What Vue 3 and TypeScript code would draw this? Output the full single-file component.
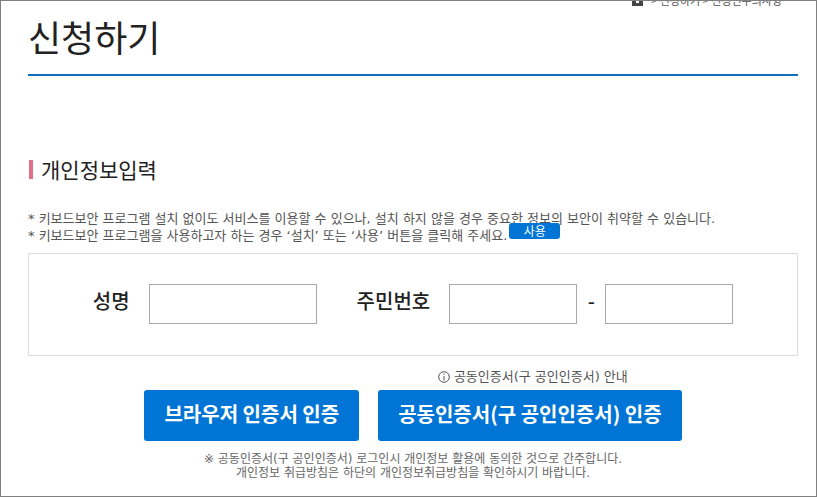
<script setup lang="ts">
import { ref } from 'vue'

const name = ref('')
const idFront = ref('')
const idBack = ref('')
</script>

<template>
  <div class="page">
    <nav class="crumbs" aria-label="현재 위치">
      <a class="home" href="#" aria-label="홈">
        <svg width="11" height="12" viewBox="0 0 11 12">
          <path d="M5.500 0 0 5v7h11V5z" fill="#444" />
          <path d="M4 6h3v3H4z" fill="#fff" />
        </svg>
      </a>
      <span>&gt; 신청하기 &gt; 신청인주의사항</span>
    </nav>

    <h1>신청하기</h1>

    <main>
      <h2>개인정보입력</h2>

      <div class="notes">
        <p>* 키보드보안 프로그램 설치 없이도 서비스를 이용할 수 있으나, 설치 하지 않을 경우 중요한 정보의 보안이 취약할 수 있습니다.</p>
        <p class="with-button">
          <span>* 키보드보안 프로그램을 사용하고자 하는 경우 ‘설치’ 또는 ‘사용’ 버튼을 클릭해 주세요.</span>
          <button type="button" class="use">사용</button>
        </p>
      </div>

      <form @submit.prevent>
        <div class="fields">
          <div class="field">
            <label for="name">성명</label>
            <input id="name" v-model="name" class="wide" type="text" />
          </div>
          <div class="field">
            <label for="id-front">주민번호</label>
            <div class="pair">
              <input id="id-front" v-model="idFront" type="text" maxlength="6" />
              <span class="dash">-</span>
              <input v-model="idBack" type="password" maxlength="7" aria-label="주민번호 뒷자리" />
            </div>
          </div>
        </div>

        <div class="actions">
          <button type="submit" class="primary">브라우저 인증서 인증</button>
          <div class="joint">
            <a href="#" class="guide">
              <svg width="12" height="12" viewBox="0 0 12 12" aria-hidden="true">
                <circle cx="6" cy="6" r="5.3" fill="none" stroke="#555" />
                <path d="M5.500 2.500h1v1.200h-1zM5.500 5h1v4.500h-1z" fill="#555" />
              </svg>
              <span>공동인증서(구 공인인증서) 안내</span>
            </a>
            <button type="submit" class="primary">공동인증서(구 공인인증서) 인증</button>
          </div>
        </div>
      </form>

      <p class="agreement">
        ※ 공동인증서(구 공인인증서) 로그인시 개인정보 활용에 동의한 것으로 간주합니다.<br />
        개인정보 취급방침은 하단의 개인정보취급방침을 확인하시기 바랍니다.
      </p>
    </main>
  </div>
</template>

<style>
body {
  background: #fff;
}
</style>

<style scoped>
.page {
  box-sizing: border-box;
  min-height: 100vh;
  padding: 0 18px 16px 27px;
  border: 1px solid #808080;
  color: #222;
  font-family: 'Noto Sans CJK KR', sans-serif;
}

h1,
h2,
p {
  margin: 0;
}

.crumbs {
  display: flex;
  justify-content: flex-end;
  align-items: flex-end;
  gap: 8px;
  height: 5px;
  padding-right: 16px;
  overflow: hidden;
  color: #555;
  font-size: 11px;
  line-height: 12px;
}

.home {
  display: flex;
}

h1 {
  padding: 2px 0 10px;
  border-bottom: 2px solid #0e6fbe;
  font-size: 36px;
  font-weight: 400;
  line-height: 56px;
}

h2 {
  display: flex;
  align-items: center;
  gap: 8px;
  margin-top: 79px;
  padding-left: 1px;
  font-size: 21px;
  font-weight: 400;
  line-height: 28px;
}

h2::before {
  content: '';
  width: 4px;
  height: 19px;
  background: #e07088;
}

.notes {
  margin-top: 27px;
  color: #555;
  font-family: 'DejaVu Sans', 'Noto Sans CJK KR', sans-serif;
  font-size: 13px;
  line-height: 17px;
}

.with-button {
  display: flex;
  align-items: flex-start;
  gap: 2px;
  height: 17px;
}

.use {
  width: 51px;
  height: 16px;
  margin-top: -4px;
  padding: 0;
  border: 0;
  border-radius: 3px;
  background: #0075d5;
  color: #fff;
  font: 400 12px/16px 'Noto Sans CJK KR', sans-serif;
}

.fields {
  display: flex;
  justify-content: center;
  gap: 40px;
  margin-top: 9px;
  padding: 30px 0 31px;
  border: 1px solid #ddd;
}

.field {
  display: flex;
  align-items: center;
  gap: 19px;
  font-size: 20px;
  font-weight: 500;
  line-height: 30px;
}

.field label,
.dash {
  margin-top: -6px;
}

.pair {
  display: grid;
  grid-template-columns: 128px 28px 128px;
  align-items: center;
  text-align: center;
}

input {
  box-sizing: border-box;
  width: 128px;
  height: 40px;
  padding: 0 8px;
  border: 1px solid #aaa;
  background: #fff;
  font: 400 16px 'Noto Sans CJK KR', sans-serif;
}

.wide {
  width: 168px;
}

.actions {
  display: flex;
  justify-content: center;
  align-items: flex-end;
  gap: 19px;
  margin-top: 12px;
}

.joint {
  display: flex;
  flex-direction: column;
}

.guide {
  display: flex;
  justify-content: center;
  align-items: center;
  gap: 4px;
  margin-bottom: 4px;
  padding-left: 6px;
  color: #555;
  font-family: 'DejaVu Sans', 'Noto Sans CJK KR', sans-serif;
  font-size: 13px;
  line-height: 18px;
  text-decoration: none;
}

.primary {
  height: 51px;
  padding: 0 20px 3px;
  border: 0;
  border-radius: 3px;
  background: #0075d5;
  color: #fff;
  font: 700 20px/48px 'Noto Sans CJK KR', sans-serif;
}

.agreement {
  margin-top: 11px;
  color: #666;
  font-family: 'DejaVu Sans', 'Noto Sans CJK KR', sans-serif;
  font-size: 12px;
  line-height: 14px;
  text-align: center;
}
</style>
